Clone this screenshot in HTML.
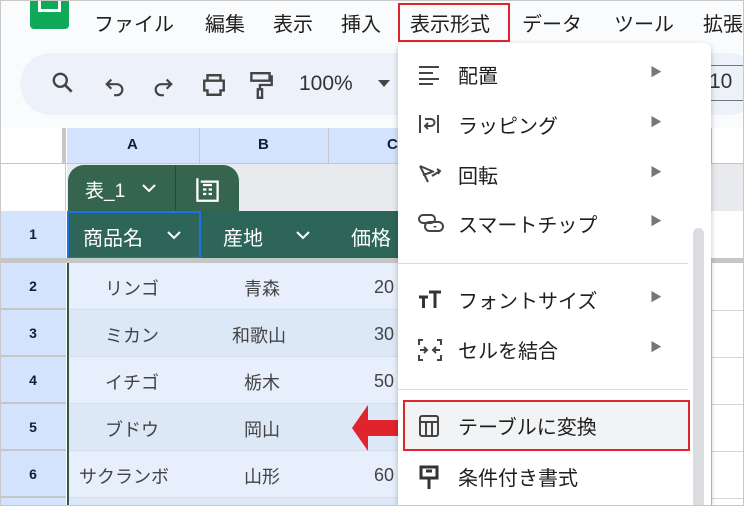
<!DOCTYPE html>
<html><head><meta charset="utf-8"><style>
*{margin:0;padding:0;box-sizing:border-box}
html{width:744px;height:506px;overflow:hidden}
body{width:744px;height:506px;overflow:hidden;position:relative;background:#fff;font-family:"Liberation Sans","Noto Sans CJK JP",sans-serif;color:#1f1f1f}
.a{position:absolute}
.menu span{position:absolute;top:8px;font-size:20px;color:#1f1f1f}
.rh{position:absolute;left:0;width:66px;background:#d3e3fd;border-bottom:2px solid #c4c7c5;font-size:14px;font-weight:bold;text-align:center;color:#0b1f3f}
.row{position:absolute;left:67px;width:331px;border-bottom:1px solid #d5dde8;font-size:18px;color:#444}
.row span{position:absolute;top:12px}
.row span.n{top:14px}
.it{position:absolute;left:0;width:313px;height:48px;font-size:20px;color:#1f1f1f}
.it .t{position:absolute;left:60px;top:9px}
.it .ar{position:absolute;left:252px;top:12px;font-size:12px;color:#777}
.it svg{position:absolute;left:20px;top:12px}
</style></head><body>
<div class="a" style="left:0;top:0;width:744px;height:506px;border:1px solid #c8c8c8;z-index:20;pointer-events:none"></div>
<div class="a" style="left:0;top:0;width:744px;height:48px;background:#f9fbfd"></div>
<div class="a" style="left:30px;top:0;width:39px;height:29px;background:#0fa958;border-radius:0 0 4px 4px"></div>
<div class="a" style="left:38px;top:0;width:23px;height:12px;border:3px solid #fff;border-top:none"></div>
<div class="menu">
<span style="left:94px">ファイル</span><span style="left:205px">編集</span><span style="left:273px">表示</span><span style="left:341px">挿入</span>
<span style="left:410px">表示形式</span><span style="left:522px">データ</span><span style="left:614px">ツール</span><span style="left:703px">拡張</span>
</div>
<div class="a" style="left:398px;top:3px;width:112px;height:39px;border:2px solid #e0242e"></div>
<div class="a" style="left:0;top:48px;width:744px;height:80px;background:#f9fbfd"></div>
<div class="a" style="left:20px;top:53px;width:740px;height:62px;background:#edf2fa;border-radius:31px"></div>
<svg class="a" style="left:50px;top:70px" width="26" height="26" viewBox="0 0 24 24"><circle cx="9.5" cy="9.5" r="6" fill="none" stroke="#444" stroke-width="2.2"/><path d="M14 14l6 6" stroke="#444" stroke-width="2.4"/></svg>
<svg class="a" style="left:104px;top:75px" width="22" height="22" viewBox="0 0 24 24"><path d="M8 5L3 10l5 5M3 10h11a6 6 0 010 12h-3" fill="none" stroke="#444" stroke-width="2.4"/></svg>
<svg class="a" style="left:152px;top:75px" width="22" height="22" viewBox="0 0 24 24"><path d="M16 5l5 5-5 5M21 10H10a6 6 0 000 12h3" fill="none" stroke="#444" stroke-width="2.4"/></svg>
<svg class="a" style="left:200px;top:72px" width="28" height="26" viewBox="0 0 24 24"><path d="M6 3h12v5H6zM3 8h18v9h-3v4H6v-4H3z" fill="none" stroke="#444" stroke-width="2.2"/></svg>
<svg class="a" style="left:248px;top:70px" width="26" height="30" viewBox="0 0 24 28"><path d="M3 3h17v7H3zM20 6h2v8H11v4M9 18h4v8H9z" fill="none" stroke="#444" stroke-width="2.2"/></svg>
<div class="a" style="left:299px;top:72px;font-size:21px;color:#333">100%</div>
<div class="a" style="left:378px;top:80px;width:0;height:0;border:6px solid transparent;border-top:7px solid #444"></div>
<div class="a" style="left:711px;top:65px;width:40px;height:36px;border-top:1px solid #777;border-bottom:1px solid #777"></div>
<div class="a" style="left:709px;top:70px;font-size:21px;color:#333">10</div>
<div class="a" style="left:0;top:128px;width:744px;height:36px;background:#fff;border-bottom:1px solid #c4c7c5"></div>
<div class="a" style="left:62px;top:128px;width:4px;height:36px;background:#c4c7c5"></div>
<div class="a" style="left:67px;top:128px;width:331px;height:35px;background:#d3e3fd"></div>
<div class="a" style="left:199px;top:128px;width:1px;height:35px;background:#c4c7c5"></div>
<div class="a" style="left:328px;top:128px;width:1px;height:35px;background:#c4c7c5"></div>
<div class="a" style="left:711px;top:128px;width:1px;height:35px;background:#c4c7c5"></div>
<div class="a" style="left:127px;top:136px;font-size:15px;font-weight:bold;color:#0b1f3f">A</div>
<div class="a" style="left:258px;top:136px;font-size:15px;font-weight:bold;color:#0b1f3f">B</div>
<div class="a" style="left:387px;top:136px;font-size:15px;font-weight:bold;color:#0b1f3f">C</div>
<div class="a" style="left:67px;top:164px;width:677px;height:47px;background:#e8eaed"></div>
<div class="a" style="left:0;top:164px;width:66px;height:47px;background:#fff;border-right:1px solid #c4c7c5"></div>
<div class="a" style="left:68px;top:165px;width:171px;height:46px;background:#35654f;border-radius:16px 16px 0 0"></div>
<div class="a" style="left:175px;top:165px;width:1px;height:46px;background:#244a38"></div>
<div class="a" style="left:85px;top:176px;font-size:19px;color:#fff">表_1</div>
<svg class="a" style="left:141px;top:183px" width="16" height="10" viewBox="0 0 16 10"><path d="M2 2l6 6 6-6" fill="none" stroke="#fff" stroke-width="2"/></svg>
<svg class="a" style="left:194px;top:176px" width="27" height="27" viewBox="0 0 24 24"><path d="M3 2v20h18V5H6" fill="none" stroke="#fff" stroke-width="2"/><path d="M8 12h3M13 12h3M8 16h3M13 16h3M8 8h8" stroke="#fff" stroke-width="2"/></svg>
<div class="rh" style="top:211px;height:49px;padding-top:15px">1</div>
<div class="a" style="left:67px;top:211px;width:331px;height:47px;background:#2e6559"></div>
<div class="a" style="left:67px;top:211px;width:134px;height:48px;border:2px solid #1a73e8"></div>
<div class="a" style="left:83px;top:222px;font-size:20px;color:#fff">商品名</div>
<svg class="a" style="left:166px;top:230px" width="16" height="10" viewBox="0 0 16 10"><path d="M2 2l6 6 6-6" fill="none" stroke="#fff" stroke-width="2"/></svg>
<div class="a" style="left:223px;top:222px;font-size:20px;color:#fff">産地</div>
<svg class="a" style="left:295px;top:230px" width="16" height="10" viewBox="0 0 16 10"><path d="M2 2l6 6 6-6" fill="none" stroke="#fff" stroke-width="2"/></svg>
<div class="a" style="left:351px;top:222px;font-size:20px;color:#fff">価格</div>
<div class="a" style="left:0;top:258px;width:744px;height:5px;background:#c4c7c5"></div>
<div class="a" style="left:67px;top:263px;width:2px;height:243px;background:#2e5a4c;z-index:2"></div>
<div class="rh" style="top:263px;height:47px;padding-top:15px">2</div>
<div class="rh" style="top:310px;height:47px;padding-top:15px">3</div>
<div class="rh" style="top:357px;height:47px;padding-top:15px">4</div>
<div class="rh" style="top:404px;height:47px;padding-top:15px">5</div>
<div class="rh" style="top:451px;height:47px;padding-top:15px">6</div>
<div class="rh" style="top:498px;height:8px;border:none"></div>
<div class="row" style="top:263px;height:47px;background:#e6effb"><span style="left:38px">リンゴ</span><span style="left:177px">青森</span><span class="n" style="left:307px">20</span></div>
<div class="row" style="top:310px;height:47px;background:#dde8f7"><span style="left:38px">ミカン</span><span style="left:165px">和歌山</span><span class="n" style="left:307px">30</span></div>
<div class="row" style="top:357px;height:47px;background:#e6effb"><span style="left:38px">イチゴ</span><span style="left:177px">栃木</span><span class="n" style="left:307px">50</span></div>
<div class="row" style="top:404px;height:47px;background:#dde8f7"><span style="left:38px">ブドウ</span><span style="left:177px">岡山</span><span class="n" style="left:307px">50</span></div>
<div class="row" style="top:451px;height:47px;background:#e6effb"><span style="left:12px">サクランボ</span><span style="left:177px">山形</span><span class="n" style="left:307px">60</span></div>
<div class="row" style="top:498px;height:8px;background:#dde8f7;border:none"></div>
<div class="a" style="left:711px;top:263px;width:1px;height:243px;background:#c4c7c5"></div>
<div class="a" style="left:711px;top:310px;width:33px;height:1px;background:#d5d5d5"></div>
<div class="a" style="left:711px;top:357px;width:33px;height:1px;background:#d5d5d5"></div>
<div class="a" style="left:711px;top:404px;width:33px;height:1px;background:#d5d5d5"></div>
<div class="a" style="left:711px;top:451px;width:33px;height:1px;background:#d5d5d5"></div>
<div class="a" style="left:711px;top:498px;width:33px;height:1px;background:#d5d5d5"></div>
<svg class="a" style="left:352px;top:404px;z-index:3" width="48" height="48" viewBox="0 0 48 48"><path d="M0 24L16 1v15h32v16H16v15z" fill="#e0242e"/></svg>
<div class="a" style="left:398px;top:43px;width:313px;height:463px;background:#fff;border-radius:6px 6px 0 0;box-shadow:0 2px 6px rgba(0,0,0,.25);z-index:4;overflow:hidden">
 <div class="it" style="top:8px"><svg width="22" height="22" viewBox="0 0 22 22"><path d="M1 4h20M1 10h14M1 16h20M1 21h14" stroke="#444" stroke-width="2"/></svg><span class="t">配置</span><span class="ar">▶</span></div>
 <div class="it" style="top:58px"><svg width="22" height="22" viewBox="0 0 22 22"><path d="M2 2v18M20 2v18M7 6h6a3 3 0 010 7H8M10 10l-3 3 3 3" fill="none" stroke="#444" stroke-width="2"/></svg><span class="t">ラッピング</span><span class="ar">▶</span></div>
 <div class="it" style="top:108px"><svg width="24" height="22" viewBox="0 0 24 22"><path d="M2 3l8 16M2 3l14 6M5 12l9-3M14 13l8-5M19 6l3 2-2 3" fill="none" stroke="#444" stroke-width="2"/></svg><span class="t">回転</span><span class="ar">▶</span></div>
 <div class="it" style="top:157px"><svg width="26" height="22" viewBox="0 0 26 22"><rect x="1" y="3" width="16" height="8" rx="4" fill="none" stroke="#444" stroke-width="2"/><rect x="7" y="10" width="18" height="9" rx="4.5" fill="none" stroke="#444" stroke-width="2"/><path d="M15 14h4l-2 2z" fill="#444"/></svg><span class="t">スマートチップ</span><span class="ar">▶</span></div>
 <div class="a" style="left:0;top:220px;width:290px;height:1px;background:#dadce0"></div>
 <div class="it" style="top:233px"><svg width="24" height="22" viewBox="0 0 24 22"><path d="M1 9h9M5.5 9v11M11 4h12M17 4v16" stroke="#333" stroke-width="3"/></svg><span class="t">フォントサイズ</span><span class="ar">▶</span></div>
 <div class="it" style="top:283px"><svg width="24" height="24" viewBox="0 0 24 24"><path d="M1 7V2h4M19 2h4v5M1 17v5h4M19 22h4v-5M2 12h7M6 9l3 3-3 3M22 12h-7M18 9l-3 3 3 3" fill="none" stroke="#444" stroke-width="2"/></svg><span class="t">セルを結合</span><span class="ar">▶</span></div>
 <div class="a" style="left:0;top:346px;width:290px;height:1px;background:#dadce0"></div>
 <div class="a" style="left:5px;top:357px;width:287px;height:51px;background:#f1f3f4;border:2px solid #e0242e"></div>
 <div class="it" style="top:359px"><svg width="22" height="24" viewBox="0 0 22 24"><rect x="2" y="2" width="18" height="20" rx="2" fill="none" stroke="#444" stroke-width="2"/><path d="M2 8h18M8 8v14M14 8v14" stroke="#444" stroke-width="2"/></svg><span class="t">テーブルに変換</span></div>
 <div class="it" style="top:410px"><svg width="22" height="26" viewBox="0 0 22 26"><path d="M3 2h16v11H3zM8 6h6M11 13v11" fill="none" stroke="#333" stroke-width="3"/></svg><span class="t">条件付き書式</span></div>
 <div class="a" style="left:295px;top:185px;width:11px;height:300px;background:#dadce0;border-radius:6px"></div>
</div>
</body></html>
